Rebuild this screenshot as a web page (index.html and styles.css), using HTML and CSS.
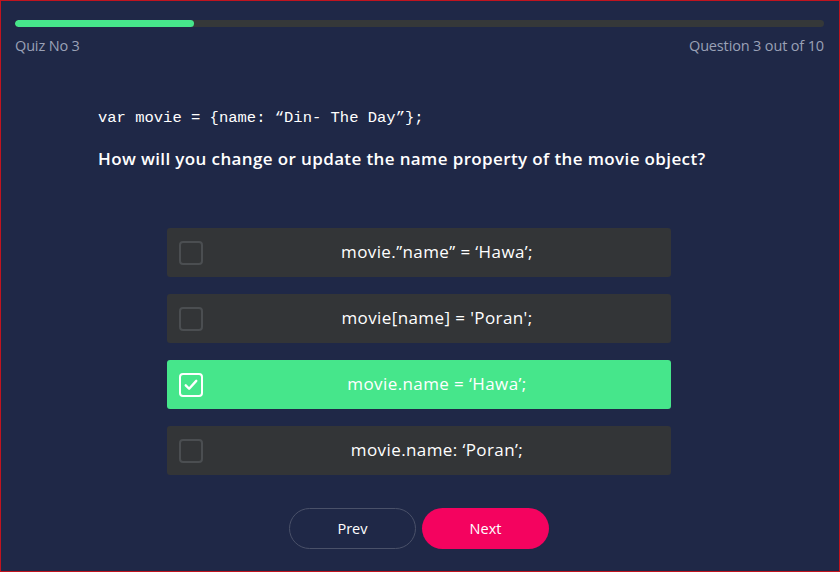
FILE: index.html
```html
<!DOCTYPE html>
<html>
<head>
<meta charset="utf-8">
<link rel="stylesheet" href="styles.css">
</head>
<body>
<div class="page">
  <div class="progress"><div class="progress-fill" style="width:22.1%"></div></div>
  <div class="meta">
    <span>Quiz No 3</span>
    <span>Question 3 out of 10</span>
  </div>
  <div class="question">
    <div class="code">var movie = {name: “Din- The Day”};</div>
    <div class="prompt">How will you change or update the name property of the movie object?</div>
  </div>
  <div class="options">
    <div class="option"><span class="check"></span><span class="label">movie.”name” = ‘Hawa’;</span></div>
    <div class="option"><span class="check"></span><span class="label">movie[name] = 'Poran';</span></div>
    <div class="option selected"><span class="check"><svg viewBox="0 0 24 24" width="18" height="18"><path d="M5 12.5l4.5 4.5L19 6.5" fill="none" stroke="#fff" stroke-width="3.2" stroke-linecap="round" stroke-linejoin="round"/></svg></span><span class="label">movie.name = ‘Hawa’;</span></div>
    <div class="option"><span class="check"></span><span class="label">movie.name: ‘Poran’;</span></div>
  </div>
  <div class="nav">
    <button class="btn prev">Prev</button>
    <button class="btn next">Next</button>
  </div>
</div>
</body>
</html>
```
FILE: styles.css
```css
* { box-sizing: border-box; }
html, body { margin: 0; padding: 0; }
body {
  background: #1f2847;
  font-family: "Open Sans", "Noto Sans", sans-serif;
}
.page {
  width: 840px;
  height: 572px;
  border: 1px solid #c0141f;
  padding: 19px 15px 0 14px;
  background: #1f2847;
}
.progress {
  height: 7px;
  border-radius: 4px;
  background: #353839;
  overflow: hidden;
}
.progress-fill {
  height: 100%;
  background: #46e68b;
  border-radius: 4px;
}
.meta {
  display: flex;
  justify-content: space-between;
  margin-top: 9px;
  font-size: 14.5px;
  line-height: 20px;
  color: #9aa1b6;
  letter-spacing: -0.15px;
}
.question {
  padding-left: 83px;
  margin-top: 52px;
}
.code {
  font-family: "Liberation Mono", "DejaVu Sans Mono", monospace;
  font-size: 15.5px;
  line-height: 20px;
  color: #ffffff;
}
.prompt {
  margin-top: 21px;
  font-size: 17px;
  font-weight: 600;
  line-height: 20px;
  color: #ffffff;
  letter-spacing: 0.38px;
}
.options {
  display: flex;
  flex-direction: column;
  gap: 17px;
  width: 504px;
  margin: 59px 0 0 152px;
}
.option {
  height: 49px;
  border-radius: 3px;
  background: #333537;
  display: flex;
  align-items: center;
  padding-left: 12px;
}
.option.selected { background: #46e68b; }
.check {
  width: 24px;
  height: 24px;
  border: 2px solid #4b4e51;
  border-radius: 4px;
  display: flex;
  align-items: center;
  justify-content: center;
  flex: none;
}
.selected .check { border-color: #ffffff; }
.label {
  flex: 1;
  text-align: center;
  padding-bottom: 3px;
  color: #ffffff;
  font-size: 17px;
  letter-spacing: 0.4px;
}
.nav {
  display: flex;
  gap: 6px;
  margin-top: 33px;
  padding-left: 274px;
}
.btn {
  width: 127px;
  height: 41px;
  border-radius: 21px;
  font-family: "Open Sans", "Noto Sans", sans-serif;
  font-size: 14.5px;
  font-weight: 500;
  color: #ffffff;
  cursor: pointer;
}
.prev {
  background: transparent;
  border: 1px solid #4a5169;
}
.next {
  background: #f4035f;
  border: none;
}
```
